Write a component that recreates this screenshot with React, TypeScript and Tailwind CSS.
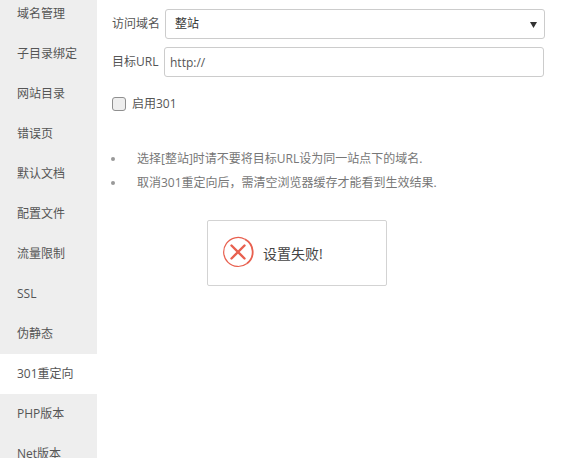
import React from 'react';

const menuItems = ['域名管理', '子目录绑定', '网站目录', '错误页', '默认文档', '配置文件', '流量限制', 'SSL', '伪静态', '301重定向', 'PHP版本', 'Net版本'];
const activeItem = '301重定向';

const tips = [
  '选择[整站]时请不要将目标URL设为同一站点下的域名.',
  '取消301重定向后，需清空浏览器缓存才能看到生效结果.',
];

const FailIcon = () => (
  <svg width="32" height="32" viewBox="0 0 32 32" fill="none" className="mb-[2px] shrink-0">
    <path d="M23 3.2A14.5 14.5 0 1 0 25 27.5" stroke="#e8604f" strokeWidth="1.2" />
    <path d="M23 3.2A14.5 14.5 0 0 1 25 27.5" stroke="#e8604f" strokeWidth="1.8" />
    <path d="M9.5 9.5L22.5 22.5M22.5 9.5L9.5 22.5" stroke="#e8604f" strokeWidth="2.4" strokeLinecap="round" />
  </svg>
);

export default function App() {
  return (
    <div className="flex h-[458px] w-[569px] overflow-hidden bg-white text-[12px] text-[#555] font-['Open_Sans','Noto_Sans_CJK_SC',sans-serif]">
      <div className="-mt-[6px] w-[97px] shrink-0 bg-[#eeeeee]">
        {menuItems.map(item => (
          <div key={item} className={`flex h-[40px] items-center pl-[17px] ${item === activeItem ? 'bg-white' : ''}`}>
            {item}
          </div>
        ))}
      </div>

      <div className="flex-1 pl-[15px] pt-[9px]">
        <div className="flex h-[30px] w-[433px] items-center">
          <span className="w-[53px]">访问域名</span>
          <div className="flex h-[30px] flex-1 items-center justify-between rounded-[3px] border border-[#cccccc] pl-[9px] pr-[7px] text-[#333]">
            <span>整站</span>
            <svg width="7" height="7" viewBox="0 0 7 7"><path d="M0 1H7L3.5 7Z" fill="#333" /></svg>
          </div>
        </div>

        <div className="mt-[8px] flex h-[30px] w-[432px] items-center">
          <span className="w-[52px]">目标URL</span>
          <input readOnly value="http://" className="h-[30px] flex-1 rounded-[3px] border border-[#cccccc] px-[5px] text-[#555] outline-none" />
        </div>

        <label className="mt-[20px] flex h-[14px] items-center gap-[6px]">
          <span className="h-[14px] w-[14px] rounded-[3px] border border-[#8f8f8f] bg-[#eeeeee]" />
          <span>启用301</span>
        </label>

        <ul className="mt-[38px] flex flex-col gap-[4px] text-[#777]">
          {tips.map(tip => (
            <li key={tip} className="flex h-[20px] items-center">
              <span className="-ml-[1px] mr-[22px] h-[4px] w-[4px] rounded-full bg-[#999]" />
              {tip}
            </li>
          ))}
        </ul>

        <div className="ml-[95px] mt-[27px] flex h-[66px] w-[180px] items-center gap-[9px] rounded-[2px] border border-[#d3d3d3] pl-[14px] text-[14px] text-[#444]">
          <FailIcon />
          <span>设置失败!</span>
        </div>
      </div>
    </div>
  );
}
